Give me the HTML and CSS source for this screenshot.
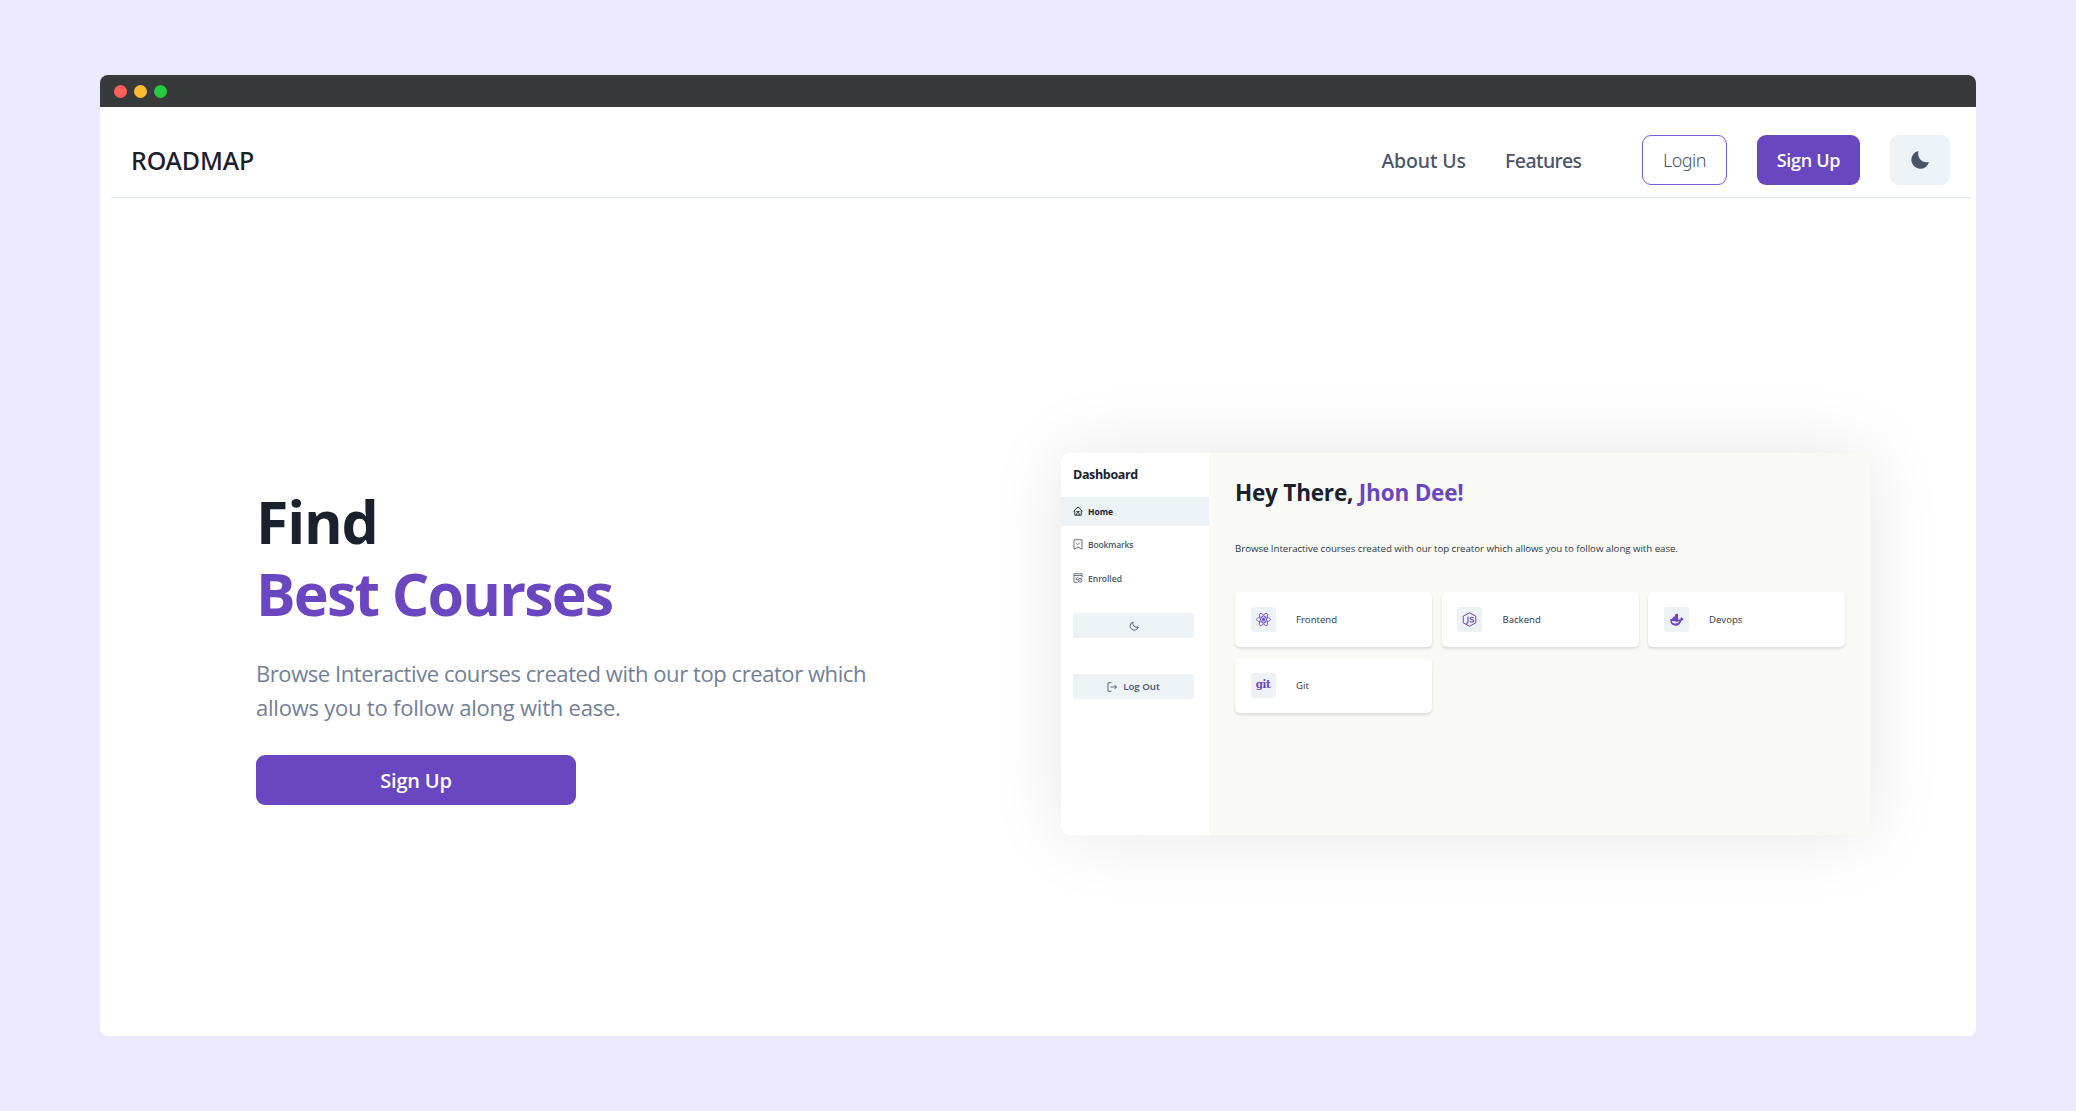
FILE: index.html
```html
<!DOCTYPE html>
<html lang="en">
<head>
<meta charset="utf-8">
<title>Roadmap</title>
<link rel="stylesheet" href="styles.css">
</head>
<body>
<div class="window">
  <div class="titlebar"><i class="dot red"></i><i class="dot yellow"></i><i class="dot green"></i></div>
  <header class="nav">
    <a class="brand">ROADMAP</a>
    <nav class="links"><a>About Us</a><a class="features">Features</a></nav>
    <button class="btn login">Login</button>
    <button class="btn primary signup">Sign Up</button>
    <button class="btn theme" aria-label="Dark mode">
      <svg width="20" height="20" viewBox="0 0 20 20"><path d="M8.300 1A9 9 0 1 0 19 12C13 13.500 7 9 8.300 1Z" fill="#4a5568"/></svg>
    </button>
  </header>
  <main class="hero">
    <section class="intro">
      <h1><span class="find">Find</span><span class="best">Best Courses</span></h1>
      <p><span class="line-a">Browse Interactive courses created with our top creator which</span><span class="line-b">allows you to follow along with ease.</span></p>
      <button class="btn primary cta">Sign Up</button>
    </section>
    <section class="preview">
      <aside class="side">
        <h2>Dashboard</h2>
        <a class="item active"><svg width="10" height="10" viewBox="0 0 20 20" fill="none" stroke="currentColor" stroke-width="1.8"><path d="M1 10.500 10 2l9 8.500M3.500 9v9.500h13V9M7.500 18v-2.500a2.500 2.500 0 0 1 5 0V18M7 11h6"/></svg>Home</a>
        <a class="item bookmarks"><svg width="10" height="11" viewBox="0 0 20 22" fill="none" stroke="currentColor" stroke-width="1.6"><path d="M2 1.500h16v19L10 16l-8 4.500ZM6.500 8.500l3 3L14 7"/></svg>Bookmarks</a>
        <a class="item"><svg width="10" height="10" viewBox="0 0 20 20" fill="none" stroke="currentColor" stroke-width="1.6"><path d="M9 18.500H2v-17h16v8M2 5h16M5 9l2 1.500L11 8M5 13h4"/><circle cx="14" cy="14.500" r="4"/><path d="m12 16.500 4-4"/></svg>Enrolled</a>
        <div class="side-btn mode"><svg width="10" height="10" viewBox="0 0 20 20" fill="none" stroke="currentColor" stroke-width="1.8"><path d="M8 2a8.300 8.300 0 1 0 10.500 10A8 8 0 0 1 8 2Z"/></svg></div>
        <div class="side-btn"><svg width="10" height="10" viewBox="0 0 20 20" fill="none" stroke="currentColor" stroke-width="1.8"><path d="M9 1.500H2v17h7M7 10h12M15 6l4 4-4 4"/></svg>Log Out</div>
      </aside>
      <div class="board">
        <h3>Hey There, <span>Jhon Dee!</span></h3>
        <p>Browse Interactive courses created with our top creator which allows you to follow along with ease.</p>
        <div class="cards">
          <div class="card"><span class="icon"><svg width="15" height="15" viewBox="0 0 30 30" fill="none" stroke="currentColor" stroke-width="1.500"><ellipse cx="15" cy="15" rx="14" ry="5.300"/><ellipse cx="15" cy="15" rx="14" ry="5.300" transform="rotate(60 15 15)"/><ellipse cx="15" cy="15" rx="14" ry="5.300" transform="rotate(120 15 15)"/><circle cx="15" cy="15" r="2.500" fill="currentColor"/></svg></span>Frontend</div>
          <div class="card"><span class="icon"><svg width="15" height="15" viewBox="0 0 30 30" fill="none" stroke="currentColor"><path d="M15 1.500 27.500 8.200v13.600L15 28.500 2.500 21.800V8.200Z" stroke-width="2"/><path d="M12 9v11q0 3-4 2.500M23 12q-1-1.500-3.500-1.500-3.500 0-3.500 2.200 0 2 3.500 2.300 4 .3 4 2.700t-4 2.400q-3 0-4-2" stroke-width="2.200"/></svg></span>Backend</div>
          <div class="card"><span class="icon"><svg width="15" height="15" viewBox="0 0 30 30"><path fill="currentColor" fill-rule="evenodd" d="M3 14h3l3-5h3V5l5-2 1 2v10h5c-.5-3 .5-4 2-5l2 3h2c0 3-2 4-4 4-2 7-6 10.500-12 10.500C6 26.500 1.500 22 3 14Zm3 4c0 3 2 5 6 5 5 0 7.500-2 9-5-3 .5-4 2-7 1.500-2-.5-4-1.500-8-1.500Z"/></svg></span>Devops</div>
          <div class="card"><span class="icon git">git</span>Git</div>
        </div>
      </div>
    </section>
  </main>
</div>
</body>
</html>
```
FILE: styles.css
```css
* { box-sizing: border-box; margin: 0; }
body {
  height: 1111px;
  padding: 75px 100px;
  background: #ece9fe;
  font-family: "Open Sans", "Noto Sans", sans-serif;
  color: #1a202c;
}
.window {
  height: 961px;
  display: flex;
  flex-direction: column;
  background: #fff;
  border-radius: 8px;
  overflow: hidden;
}
.titlebar {
  height: 32px;
  flex: none;
  display: flex;
  align-items: center;
  gap: 7px;
  padding: 1px 0 0 13.5px;
  background: #38393a;
}
.dot { width: 13px; height: 13px; border-radius: 50%; }
.red { background: #ff5f57; }
.yellow { background: #febc2e; }
.green { background: #28c840; }

.nav {
  height: 91px;
  flex: none;
  display: flex;
  align-items: center;
  margin: 0 6px 0 11px;
  padding: 15px 20px 0 20px;
  border-bottom: 1px solid #e2e8f0;
}
.brand { margin-right: auto; font: 500 25px "Noto Sans", sans-serif; letter-spacing: -0.15px; }
.links {
  display: flex;
  gap: 39px;
  margin-right: 59px;
  padding-top: 2px;
  font: 500 19.5px "Noto Sans", sans-serif;
  letter-spacing: -0.1px;
  color: #4a5568;
}
.features { width: 78px; letter-spacing: -0.55px; }
.btn {
  display: flex;
  align-items: center;
  justify-content: center;
  height: 50px;
  padding: 0;
  border: 0;
  border-radius: 9px;
  font: 600 18.5px "Open Sans", sans-serif;
}
.primary { background: #6b46c1; color: #fff; }
.login { width: 85px; margin-right: 30px; border: 1px solid #805ad5; background: #fff; color: #4a5568; font: 350 18px "Noto Sans", sans-serif; letter-spacing: -0.5px; }
.signup { width: 103px; margin-right: 30px; font-size: 18px; letter-spacing: -0.3px; }
.theme { width: 60px; background: #edf2f7; }

.hero { flex: 1; display: flex; align-items: flex-start; }
.intro { width: 805px; padding: 287px 0 0 156px; }
h1 { font-size: 59px; line-height: 72px; font-weight: 700; }
h1 span, .intro p span { display: block; white-space: nowrap; }
.find { letter-spacing: -1.2px; }
.best { color: #6b46c1; letter-spacing: -1.8px; }
.intro p { margin-top: 27px; font-size: 22px; line-height: 34px; color: #718096; }
.line-a { letter-spacing: -0.43px; }
.line-b { letter-spacing: -0.22px; }
.cta { width: 320px; margin-top: 31px; font-size: 20px; letter-spacing: -0.2px; }

.preview {
  width: 809px;
  height: 382px;
  margin: 255px 0 0 156px;
  display: flex;
  border-radius: 9px;
  background: #fff;
  box-shadow: 0 0 76px rgba(0, 0, 0, 0.1);
}
.side { width: 148px; color: #4a5568; }
.side h2 { padding: 13px 12px 0; height: 44px; font-size: 12.5px; line-height: 17px; letter-spacing: -0.35px; color: #1a202c; }
.item { display: flex; align-items: center; gap: 5px; height: 29px; margin-bottom: 4.600px; padding: 0 0 1px 12px; font-size: 8.500px; font-weight: 600; }
.active { background: #edf2f7; color: #1a202c; font-weight: 700; }
.bookmarks { letter-spacing: -0.15px; }
.side-btn { display: flex; align-items: center; justify-content: center; gap: 6px; width: 121px; height: 25px; margin-left: 12px; border-radius: 3px; background: #edf2f7; font-size: 9.700px; font-weight: 600; }
.mode { margin: 20px 0 36px 12px; }
.board { flex: 1; padding: 25px 25px 0 26px; background: #f9faf5; border-radius: 0 9px 9px 0; }
h3 { font-size: 22.5px; line-height: 30px; letter-spacing: -0.2px; }
h3 span { color: #6b46c1; }
.board p { margin-top: 34px; font-size: 9.700px; line-height: 14px; letter-spacing: -0.04px; white-space: nowrap; color: #2d3748; }
.cards { display: grid; grid-template-columns: repeat(3, 197px); gap: 11px 9.500px; margin-top: 36px; }
.card { display: flex; align-items: center; height: 55px; padding-left: 15.500px; border-radius: 5px; background: #fff; box-shadow: 0 2px 3px rgba(0, 0, 0, 0.12); font-size: 9.600px; color: #2d3748; }
.icon { display: flex; align-items: center; justify-content: center; width: 25px; height: 25px; margin-right: 20.500px; border-radius: 3px; background: #edf2f7; color: #6b46c1; }
.git { padding-bottom: 3px; font: 700 11.5px "DejaVu Serif Condensed", "DejaVu Serif", serif; letter-spacing: -0.5px; }
```
